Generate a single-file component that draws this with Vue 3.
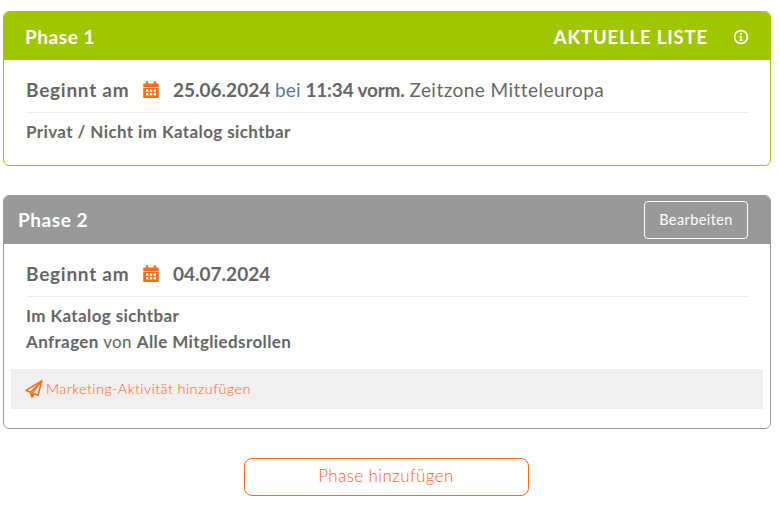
<script setup>
const grid = [0, 1, 2].flatMap((c) => [0, 1].map((r) => ({ x: 3 + c * 3.8, y: 8.4 + r * 3.6 })))
</script>

<template>
  <main class="page">
    <section class="panel current">
      <header class="head head-current">
        <h2 class="title title-current">Phase 1</h2>
        <div class="status">
          <span class="status-label">AKTUELLE LISTE</span>
          <svg class="info" viewBox="0 0 16 16" aria-hidden="true">
            <circle cx="8" cy="8" r="6.4" fill="none" stroke="#fff" stroke-width="1.7" />
            <circle cx="8" cy="4.9" r="1.15" fill="#fff" />
            <path d="M6.2 6.9h2.6v3.7h1v1.3H6.2v-1.3h1V8.2h-1z" fill="#fff" />
          </svg>
        </div>
      </header>
      <div class="body">
        <div class="start">
          <strong class="start-label">Beginnt am</strong>
          <svg class="cal" viewBox="0 0 16 17" aria-hidden="true">
            <path d="M0.2 3.4a1 1 0 0 1 1-1H3V0.2h2.2v2.2h5.6V0.2H13v2.2h1.8a1 1 0 0 1 1 1V6.3H0.2z" fill="#ff6a13" />
            <path d="M0.2 7h15.6v9a1 1 0 0 1-1 1H1.2a1 1 0 0 1-1-1z" fill="#ff6a13" />
            <rect v-for="g in grid" :key="g.x + '-' + g.y" :x="g.x" :y="g.y" width="2.4" height="2.4" fill="#fff" />
          </svg>
          <span class="start-value"><b>25.06.2024</b> <span class="bei">bei</span> <b class="time">11:34 vorm.</b> <span class="zone">Zeitzone Mitteleuropa</span></span>
        </div>
        <div class="details">
          <p><b>Privat / Nicht im Katalog sichtbar</b></p>
        </div>
      </div>
    </section>

    <section class="panel upcoming">
      <header class="head head-upcoming">
        <h2 class="title">Phase 2</h2>
        <button class="edit" type="button">Bearbeiten</button>
      </header>
      <div class="body">
        <div class="start">
          <strong class="start-label">Beginnt am</strong>
          <svg class="cal" viewBox="0 0 16 17" aria-hidden="true">
            <path d="M0.2 3.4a1 1 0 0 1 1-1H3V0.2h2.2v2.2h5.6V0.2H13v2.2h1.8a1 1 0 0 1 1 1V6.3H0.2z" fill="#ff6a13" />
            <path d="M0.2 7h15.6v9a1 1 0 0 1-1 1H1.2a1 1 0 0 1-1-1z" fill="#ff6a13" />
            <rect v-for="g in grid" :key="g.x + '-' + g.y" :x="g.x" :y="g.y" width="2.4" height="2.4" fill="#fff" />
          </svg>
          <span class="start-value"><b>04.07.2024</b></span>
        </div>
        <div class="details">
          <p><b>Im Katalog sichtbar</b></p>
          <p><b>Anfragen</b> <span class="von">von</span> <b>Alle Mitgliedsrollen</b></p>
        </div>
      </div>
      <div class="marketing">
        <svg class="plane" viewBox="0 0 18 18" aria-hidden="true">
          <path d="M16.8 0.9 0.9 10.3l4.6 1.9 1.4 4.9 2.4-3.4 3.8 1.6z" fill="none" stroke="#ff6a13" stroke-width="1.5" stroke-linejoin="round" />
          <path d="M16.8 0.9 5.5 12.2l1.4 4.9.9-4.6z" fill="none" stroke="#ff6a13" stroke-width="1.3" stroke-linejoin="round" />
        </svg>
        <span class="marketing-text">Marketing-Aktivität hinzufügen</span>
      </div>
    </section>

    <div class="add-wrap">
      <button class="add" type="button">Phase hinzufügen</button>
    </div>
  </main>
</template>

<style>
html, body { margin: 0; background: #fff; }
</style>

<style scoped>
.page {
  width: 768px;
  padding: 11px 0 0 3px;
  font-family: "Lato", "Open Sans", sans-serif;
  color: #666;
}
.panel {
  box-sizing: border-box;
  border: 1px solid;
  border-radius: 6px;
  overflow: hidden;
}
.current { border-color: #a0c600; height: 155px; }
.upcoming { border-color: #999; height: 234px; margin-top: 29px; }
.head {
  box-sizing: border-box;
  height: 49px;
  margin: -1px -1px 0;
  display: flex;
  align-items: center;
  justify-content: space-between;
  color: #fff;
}
.head-current { background: #a0c600; padding: 0 22px; }
.head-upcoming { background: #999; padding: 0 23px 0 15px; }
.title { margin: 0; font-size: 19px; font-weight: 700; letter-spacing: 0.55px; }
.title-current { margin-top: 2px; }
.status { display: flex; align-items: center; gap: 25px; margin-top: 3px; }
.status-label { font-size: 18.5px; font-weight: 700; letter-spacing: 0.85px; }
.info { width: 16px; height: 16px; }
.edit {
  box-sizing: border-box;
  width: 104px;
  height: 38px;
  padding: 0;
  border: 1px solid #fff;
  border-radius: 4px;
  background: transparent;
  color: #fff;
  font: 400 14.5px "Lato", sans-serif;
  letter-spacing: 0.4px;
}
.body { padding: 0 22px; }
.start {
  box-sizing: border-box;
  height: 53px;
  padding-top: 7px;
  display: flex;
  align-items: center;
  border-bottom: 1px solid #eee;
  font-size: 19px;
}
.start-label { width: 117px; font-weight: 700; letter-spacing: 0.75px; }
.cal { width: 16px; height: 17px; flex: none; }
.start-value { margin-left: 14px; white-space: pre-wrap; }
.start-value b { font-weight: 700; }
.time { letter-spacing: -0.2px; }
.bei { color: #5b7a9d; font-weight: 400; letter-spacing: 0.1px; }
.zone { font-weight: 400; letter-spacing: 0.45px; }
.details { padding-top: 6px; font-size: 17px; line-height: 26px; letter-spacing: 0.39px; }
.details p { margin: 0; }
.details b { font-weight: 700; }
.von { font-weight: 400; }
.marketing {
  height: 40px;
  margin: 14px 7px 0;
  padding-left: 14px;
  display: flex;
  align-items: center;
  gap: 3px;
  background: #f0f0f0;
}
.plane { width: 18px; height: 18px; flex: none; }
.marketing-text { color: #ff6128; font-size: 14.5px; font-weight: 300; letter-spacing: 0.39px; margin-bottom: 2px; }
.add-wrap { display: flex; justify-content: center; margin-top: 29px; padding-right: 2px; }
.add {
  box-sizing: border-box;
  width: 285px;
  height: 38px;
  padding: 0 0 3px;
  border: 1px solid #ff6a13;
  border-radius: 8px;
  background: #fff;
  color: #ff6128;
  font: 300 17px "Lato", sans-serif;
  letter-spacing: 0.4px;
}
</style>
